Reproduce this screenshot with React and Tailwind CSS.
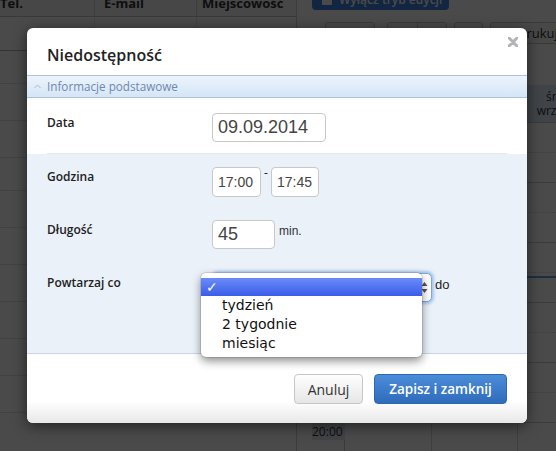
import React from "react";

const hours = [
  { top: "15:00", dotted: true },
  { dotted: false },
  { top: "16:00", dotted: true },
  { dotted: false },
  { top: "17:00", dotted: true },
  { dotted: false },
  { top: "18:00", dotted: true },
  { dotted: false },
  { top: "19:00", dotted: true },
  { dotted: false },
  { top: "20:00", dotted: true },
];

function Page() {
  return (
    <div className="flex h-full text-[#333]">
      <div className="w-[297px] shrink-0 border-r border-[#cfcfcf]">
        <div className="-mt-[6px] flex h-[23px] border-b border-[#c4c4c4] bg-[#f3f3f3] text-[13px] font-bold leading-[18px]">
          <div className="w-[95px] border-r border-[#d2d2d2]">Tel.</div>
          <div className="w-[102px] border-r border-[#d2d2d2] pl-[9px]">E-mail</div>
          <div className="flex-1 pl-[5px]">Miejscowość</div>
        </div>
        {[34, 33, 37, 37, 33, 37, 37, 37, 37, 37, 37].map((h, i) => (
          <div
            key={i}
            className={`flex border-b ${i === 0 ? "border-[#a9b6c6]" : "border-[#e4e4e4]"}`}
            style={{ height: h }}
          >
            <div className="w-[95px] border-r border-dotted border-[#d6d6d6]" />
            <div className="w-[102px] border-r border-dotted border-[#d6d6d6]" />
            <div className="flex-1" />
          </div>
        ))}
      </div>

      <div className="min-w-0 flex-1 pl-[15px]">
        <div className="-mt-[10px] flex h-[20px] w-[137px] items-center gap-[7px] rounded-[4px] bg-[#3f7fe0] pl-[10px] text-[12px] font-semibold text-white">
          <span className="h-[10px] w-[10px] rounded-[1px] bg-white" />
          Wyłącz tryb edycji
        </div>
        <div className="mt-[12px] flex h-[22px] gap-[7px] pl-[13px] text-[13px]">
          <div className="w-[50px] shrink-0 rounded-[3px] border border-[#c9c9c9] bg-[#f8f8f8]" />
          <div className="ml-[5px] flex w-[60px] shrink-0 rounded-[3px] border border-[#c9c9c9] bg-[#f8f8f8]">
            <div className="w-[30px] border-r border-[#c9c9c9]" />
          </div>
          <div className="w-[29px] shrink-0 rounded-[3px] border border-[#c9c9c9] bg-[#f8f8f8]" />
          <div className="flex w-[90px] shrink-0 items-center gap-[6px] rounded-[3px] border border-[#c9c9c9] bg-[#f8f8f8] pl-[8px] leading-none">
            <span className="h-[11px] w-[12px] rounded-[1px] border-2 border-[#333]" />
            Drukuj
          </div>
        </div>

        <div className="relative mt-[41px] ml-[-9px]">
          <div className="flex h-[38px] border-b border-[#c9c9c9] bg-[#dbe7f5] text-[12px] leading-[14px]">
            <div className="w-[42px] shrink-0 border-r border-[#c9c9c9]" />
            <div className="w-[87px] shrink-0 border-r border-[#c9c9c9]" />
            <div className="w-[86px] shrink-0 border-r border-[#c9c9c9]" />
            <div className="w-[87px] shrink-0 pt-[5px] pl-[11px] text-center">
              <div className="w-[52px]">śro</div>
              <div className="w-[52px]">wrz 10</div>
            </div>
          </div>
          {hours.map((r, i) => (
            <div
              key={i}
              className={`flex h-[30px] border-b ${r.dotted ? "border-dotted border-[#d4d4d4]" : "border-[#cfcfcf]"}`}
            >
              <div className="w-[42px] shrink-0 border-r border-[#c9c9c9] pl-[9px]">
                {r.top === "20:00" && (
                  <span className="block w-[33px] bg-[#dfe7f2] text-[12px] leading-[17px]">20:00</span>
                )}
              </div>
              <div className="w-[87px] shrink-0 border-r border-[#d9d9d9]" />
              <div className="w-[86px] shrink-0 border-r border-[#d9d9d9]" />
              <div className="flex-1" />
            </div>
          ))}
          <div className="absolute left-[42px] right-0 top-[191px] h-[2px] bg-[#6d9fd6]" />
        </div>
      </div>
    </div>
  );
}

function Field({ value, w, size }) {
  return (
    <input
      readOnly
      value={value}
      className={`h-[29px] rounded-[4px] border border-[#c8c8c8] bg-white px-[5px] font-['Liberation_Sans',Arial,sans-serif] text-[#444] outline-none ${w} ${size}`}
    />
  );
}

const labelCls = "w-[165px] pt-[1px] text-[12px] font-semibold leading-[18px] text-[#222]";

function Modal() {
  return (
    <div className="absolute left-[27px] top-[28px] flex h-[395px] w-[500px] flex-col rounded-[6px] bg-white shadow-[0_3px_14px_rgba(0,0,0,0.55)]">
      <div className="relative h-[47px] shrink-0 pl-[20px] pt-[14px]">
        <h3 className="text-[16px] font-semibold leading-[26px] text-[#222]">Niedostępność</h3>
        <svg className="absolute right-[9px] top-[9px]" width="10" height="10" viewBox="0 0 10 10">
          <path d="M1 1 L9 9 M9 1 L1 9" stroke="#b3b3b3" strokeWidth="3" strokeLinecap="round" />
        </svg>
      </div>

      <div className="flex h-[23px] shrink-0 items-center gap-[6px] border-y border-[#adc2db] bg-[linear-gradient(to_bottom,#ecf4fd,#d5e5f7)] pl-[7px] text-[11.7px] text-[#6f88ad]">
        <svg width="7" height="5" viewBox="0 0 7 5">
          <path d="M0.5 4 L3.5 1 L6.5 4" stroke="#a8b7c9" strokeWidth="1" fill="none" />
        </svg>
        Informacje podstawowe
      </div>

      <div className="flex h-[56px] shrink-0 flex-col">
        <div className="flex flex-1 items-start pl-[20px] pt-[15px]">
          <label className={labelCls}>Data</label>
          <Field value="09.09.2014" w="w-[114px]" size="text-[18px]" />
        </div>
        <div className="mx-[20px] h-px bg-[#e3e8ee]" />
      </div>

      <div className="h-[200px] shrink-0 border-b border-[#cbd5e1] bg-[#eaf1f9] pl-[20px] pt-[13px]">
        <div className="flex items-start">
          <label className={labelCls}>Godzina</label>
          <Field value="17:00" w="w-[49px] h-[30px]" size="text-[14px]" />
          <span className="w-[10px] text-center text-[12px] leading-[12px] text-[#222]">-</span>
          <Field value="17:45" w="w-[48px] h-[30px]" size="text-[14px]" />
        </div>

        <div className="mt-[23px] flex items-start">
          <label className={labelCls}>Długość</label>
          <Field value="45" w="w-[63px]" size="text-[18px]" />
          <span className="ml-[4px] pt-[2px] font-['Liberation_Sans',Arial,sans-serif] text-[12px] text-[#333]">min.</span>
        </div>

        <div className="mt-[24px] flex items-start">
          <label className={labelCls}>Powtarzaj co</label>
          <div className="relative ml-[1px] h-[29px] w-[219px] rounded-[5px] border border-[#7fa7dd] bg-white shadow-[0_0_3px_2px_rgba(110,160,230,0.55)]">
            <svg className="absolute right-[3px] top-[7px]" width="7" height="13" viewBox="0 0 7 13">
              <path d="M0.5 5 L3.5 1 L6.5 5 Z M0.5 8 L3.5 12 L6.5 8 Z" fill="#555" />
            </svg>
            <ul className="absolute left-[-13px] top-[-1px] w-[221px] rounded-[5px] bg-white pb-[4px] pt-[5px] font-['DejaVu_Sans',sans-serif] text-[14px] leading-[19px] text-[#111] shadow-[0_4px_10px_rgba(0,0,0,0.45),0_0_0_1px_rgba(0,0,0,0.1)]">
              <li className="flex h-[18px] items-center bg-[linear-gradient(to_bottom,#6a8cf8,#3a5ce8)] pl-[5px] text-[14px] text-white">✓</li>
              <li className="pl-[21px]">tydzień</li>
              <li className="pl-[21px]">2 tygodnie</li>
              <li className="pl-[21px]">miesiąc</li>
            </ul>
          </div>
          <span className="ml-[3px] pt-[2px] font-['Liberation_Sans',Arial,sans-serif] text-[13px] text-[#222]">do</span>
        </div>
      </div>

      <div className="flex flex-1 items-start justify-end gap-[11px] rounded-b-[6px] bg-[linear-gradient(to_bottom,#fff_68%,#e8e8e8)] pr-[20px] pt-[20px]">
        <button className="h-[30px] w-[69px] rounded-[4px] border border-[#c6c6c6] bg-[linear-gradient(to_bottom,#fefefe,#e6e6e6)] text-[14px] text-[#333]">
          Anuluj
        </button>
        <button className="h-[30px] w-[133px] rounded-[4px] border border-[#2e68b2] bg-[linear-gradient(to_bottom,#4b8cd9,#2f6cbb)] text-[13.5px] font-semibold text-white">
          Zapisz i zamknij
        </button>
      </div>
    </div>
  );
}

export default function App() {
  return (
    <div className="relative h-[451px] w-[556px] overflow-hidden bg-white font-['Open_Sans',sans-serif]">
      <Page />
      <div className="absolute inset-0 bg-black/[0.71]" />
      <Modal />
    </div>
  );
}
